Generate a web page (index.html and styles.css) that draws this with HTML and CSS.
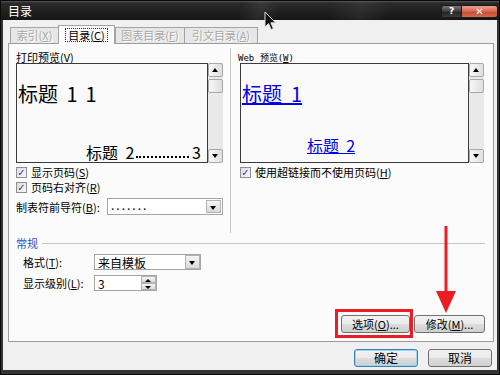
FILE: index.html
```html
<!DOCTYPE html>
<html lang="zh-CN">
  <head>
    <meta charset="UTF-8" />
    <title>目录</title>
    <link rel="stylesheet" href="styles.css">
  </head>
  <body>
    <div class="window">
      <div class="titlebar">
        <span class="title">目录</span>
        <div class="caption-btns">
          <span class="cap-btn help">?</span>
          <span class="cap-btn close">✕</span>
        </div>
      </div>

      <div class="client">
        <div class="tabs">
          <span class="tab t1">索引(<u>X</u>)</span>
          <span class="tab active t2"><span class="focus">目录(<u>C</u>)</span></span>
          <span class="tab t3">图表目录(<u>F</u>)</span>
          <span class="tab t4">引文目录(<u>A</u>)</span>
        </div>

        <div class="panel">
          <div class="top">
            <div class="col col-left">
              <div class="label">打印预览(<u>V</u>)</div>
              <div class="preview-wrap">
                <div class="preview">
                  <div class="p-h1">标题 <span class="num">1</span><span class="pg">1</span></div>
                  <div class="p-h2"><span>标题 <span class="num">2</span></span><span class="dots"></span><span>3</span></div>
                </div>
                <div class="scrollbar">
                  <span class="sb-btn up"></span>
                  <span class="sb-thumb"></span>
                  <span class="sb-track"></span>
                  <span class="sb-btn down"></span>
                </div>
              </div>
              <div class="check first"><span class="box">✓</span>显示页码(<u>S</u>)</div>
              <div class="check"><span class="box">✓</span>页码右对齐(<u>R</u>)</div>
              <div class="field-row leader">
                <span class="field-label">制表符前导符(<u>B</u>):</span>
                <div class="combo leader-combo">
                  <span class="combo-text">.......</span>
                  <span class="combo-btn"></span>
                </div>
              </div>
            </div>

            <div class="sep"></div>

            <div class="col col-right">
              <div class="label web-label">Web 预览(<u>W</u>)</div>
              <div class="preview-wrap web">
                <div class="preview">
                  <div class="w-h1">标题&nbsp;&nbsp;1</div>
                  <div class="w-h2">标题&nbsp;&nbsp;2</div>
                </div>
                <div class="scrollbar">
                  <span class="sb-btn up"></span>
                  <span class="sb-thumb"></span>
                  <span class="sb-track"></span>
                  <span class="sb-btn down"></span>
                </div>
              </div>
              <div class="check first web-check"><span class="box">✓</span>使用超链接而不使用页码(<u>H</u>)</div>
            </div>
          </div>

          <div class="group-title"><span>常规</span><span class="group-line"></span></div>
          <div class="field-row general first-row">
            <span class="field-label">格式(<u>T</u>):</span>
            <div class="combo format-combo">
              <span class="combo-text">来自模板</span>
              <span class="combo-btn"></span>
            </div>
          </div>
          <div class="field-row general second-row">
            <span class="field-label">显示级别(<u>L</u>):</span>
            <div class="spinner">
              <span class="combo-text">3</span>
              <span class="spin-btns"><span class="spin up"></span><span class="spin down"></span></span>
            </div>
          </div>

          <div class="panel-buttons">
            <span class="btn opt">选项(<u>O</u>)...</span>
            <span class="btn mod">修改(<u>M</u>)...</span>
          </div>
        </div>

        <div class="footer">
          <span class="btn default">确定</span>
          <span class="btn">取消</span>
        </div>
      </div>

      <div class="highlight"></div>
      <svg class="overlay" width="500" height="375" viewBox="0 0 500 375">
        <line x1="446" y1="226" x2="446" y2="294" stroke="#ec1c24" stroke-width="3" />
        <polygon points="436,291 456,291 446,313" fill="#ec1c24" />
        <path d="M265 12 L265 27 L268.5 23.6 L271.2 29.5 L273.4 28.5 L270.8 22.8 L275.6 22.8 Z" fill="#111" stroke="#ddd" stroke-width="1" stroke-linejoin="round" />
      </svg>
    </div>
  </body>
</html>
```

FILE: styles.css
```css
* {
  box-sizing: border-box;
}
body {
  margin: 0;
  font-family: "Noto Sans CJK SC", "DejaVu Sans", sans-serif;
  font-size: 11px;
  color: #000;
  background: #2a2a2a;
}
u {
  text-decoration: underline;
}
.window {
  position: relative;
  width: 500px;
  height: 375px;
  background: #343434;
  border: 1px solid #0a0a0a;
  display: flex;
  flex-direction: column;
  overflow: hidden;
}

/* title bar */
.titlebar {
  height: 19px;
  display: flex;
  align-items: flex-start;
  justify-content: space-between;
  background:
    linear-gradient(105deg, transparent 48%, rgba(255, 255, 255, 0.07) 52%, transparent 56%),
    linear-gradient(100deg, transparent 66%, rgba(255, 255, 255, 0.06) 72%, transparent 78%),
    linear-gradient(to bottom, #555 0, #2a2a2a 2px, #161616 100%);
}
.title {
  color: #fff;
  font-size: 12px;
  line-height: 17px;
  padding-left: 7px;
  padding-top: 1px;
}
.caption-btns {
  display: flex;
  margin-top: 4px;
  margin-right: 1px;
}
.cap-btn {
  height: 13px;
  color: #fff;
  font-weight: bold;
  font-family: "DejaVu Sans", sans-serif;
  font-size: 9px;
  line-height: 11px;
  text-align: center;
  border: 1px solid #1a1a1a;
}
.help {
  width: 21px;
  border-radius: 3px 0 0 3px;
  background: linear-gradient(to bottom, #7a7a7a, #3a3a3a 50%, #222 51%, #3c3c3c);
}
.close {
  width: 36px;
  border-left: none;
  border-radius: 0 3px 3px 0;
  font-size: 10px;
  background: linear-gradient(to bottom, #eaa08e, #d5664d 50%, #c44a2f 51%, #d76a4f);
}

/* client area */
.client {
  flex: 1;
  margin: 0 2px 4px 2px;
  background: #f0f0f0;
  padding: 5px 3px 0 5px;
  display: flex;
  flex-direction: column;
}
.tabs {
  height: 19px;
  margin-bottom: -1px;
  padding-left: 2px;
  display: flex;
  align-items: flex-start;
}
.tab {
  height: 16px;
  margin-top: 2px;
  border: 1px solid #a3a3a3;
  border-bottom: none;
  border-right: none;
  background: #e6e6e6;
  color: #a6a6a6;
  text-shadow: 1px 1px 0 #fff;
  line-height: 14px;
  text-align: center;
}
.t1 { width: 48px; }
.t2 { width: 57px; }
.t3 { width: 69px; }
.t4 { width: 74px; border-right: 1px solid #a3a3a3; }
.tab.active {
  position: relative;
  z-index: 1;
  height: 19px;
  margin-top: 0;
  background: #fbfbfb;
  color: #000;
  text-shadow: none;
  border-right: 1px solid #a3a3a3;
  padding-top: 2px;
}
.focus {
  display: inline-block;
  border: 1px dotted #333;
  padding: 0 2px;
  line-height: 12px;
}

.panel {
  height: 299px;
  border: 1px solid #9c9c9c;
  background: #fbfbfb;
  padding: 4px 7px 8px 7px;
  display: flex;
  flex-direction: column;
}
.top {
  height: 185px;
  display: flex;
}
.col {
  padding-top: 4px;
}
.col-left {
  width: 207px;
}
.col-right {
  flex: 1;
}
.sep {
  width: 1px;
  margin: 0 7px;
  background: #c8c8c8;
}
.label {
  height: 11px;
  line-height: 11px;
}
.web-label {
  margin-top: 1px;
  height: 10px;
  line-height: 10px;
  font-family: "DejaVu Sans Mono", monospace;
  font-size: 9px;
}

/* preview boxes */
.preview-wrap {
  display: flex;
  height: 100px;
}
.preview-wrap.web {
  margin-left: 2px;
}
.preview {
  width: 192px;
  height: 100px;
  border: 1px solid #3c3c3c;
  background: #fafafa;
  overflow: hidden;
  padding-left: 1px;
}
.web .preview {
  width: 229px;
}
.num {
  margin-left: 4px;
}
.p-h1 {
  margin-top: 18px;
  font-size: 20px;
  line-height: 24px;
  white-space: pre;
}
.p-h1 .pg {
  margin-left: 8px;
}
.p-h2 {
  margin-top: 36px;
  margin-left: 68px;
  margin-right: 6px;
  display: flex;
  font-size: 16px;
  line-height: 20px;
  white-space: pre;
}
.dots {
  flex: 1;
  border-bottom: 2px dotted #000;
  margin: 0 3px 4px 2px;
}
.w-h1 {
  margin-top: 18px;
  font-size: 20px;
  line-height: 24px;
  color: #0000ee;
  text-decoration: underline;
  white-space: pre;
}
.w-h2 {
  margin-top: 29px;
  margin-left: 65px;
  font-size: 16px;
  line-height: 20px;
  color: #0000ee;
  text-decoration: underline;
  white-space: pre;
}

/* scrollbars */
.scrollbar {
  width: 15px;
  display: flex;
  flex-direction: column;
  background: #e9e9e9;
}
.sb-btn,
.sb-thumb {
  height: 14px;
  border: 1px solid #a8a8a8;
  border-radius: 2px;
  background: linear-gradient(to right, #f8f8f8, #dedede);
  position: relative;
}
.sb-thumb {
  margin-top: 2px;
}
.sb-track {
  flex: 1;
}
.sb-btn::after {
  content: "";
  position: absolute;
  left: 3px;
  top: 4px;
  border-left: 3px solid transparent;
  border-right: 3px solid transparent;
}
.sb-btn.up::after {
  border-bottom: 4px solid #000;
}
.sb-btn.down::after {
  border-top: 4px solid #000;
}

/* checkboxes */
.check {
  height: 15px;
  line-height: 15px;
  display: flex;
  align-items: center;
  white-space: nowrap;
}
.check.first {
  margin-top: 2px;
}
.web-check {
  margin-left: 2px;
}
.box {
  width: 11px;
  height: 11px;
  border: 1px solid #8e8f8f;
  background: linear-gradient(135deg, #dcdcdc, #fafafa);
  margin-right: 4px;
  color: #1d3aa0;
  font-size: 10px;
  line-height: 9px;
  text-align: center;
  font-family: "DejaVu Sans", sans-serif;
  font-weight: bold;
}

/* combos and rows */
.field-row {
  display: flex;
  align-items: center;
}
.leader {
  margin-top: 3px;
}
.leader .field-label {
  width: 91px;
}
.combo,
.spinner {
  height: 17px;
  border: 1px solid #a5a5a5;
  background: #fff;
  display: flex;
  align-items: stretch;
}
.leader-combo {
  width: 116px;
}
.combo-text {
  flex: 1;
  padding-left: 3px;
  line-height: 15px;
  font-size: 12px;
}
.leader-combo .combo-text {
  letter-spacing: 2px;
  line-height: 11px;
}
.combo-btn {
  width: 15px;
  margin: 1px;
  border: 1px solid #b3b3b3;
  background: linear-gradient(to bottom, #f6f6f6, #dadada);
  position: relative;
}
.combo-btn::after {
  content: "";
  position: absolute;
  left: 3px;
  top: 5px;
  border-left: 3px solid transparent;
  border-right: 3px solid transparent;
  border-top: 4px solid #000;
}

.group-title {
  margin-top: 4px;
  height: 12px;
  display: flex;
  align-items: center;
  color: #1c55c4;
  line-height: 12px;
}
.group-line {
  flex: 1;
  height: 1px;
  background: #c6c6c6;
  margin-left: 4px;
  margin-right: 1px;
}
.general {
  padding-left: 7px;
}
.general .field-label {
  width: 71px;
}
.first-row {
  margin-top: 5px;
}
.second-row {
  margin-top: 5px;
}
.format-combo {
  width: 107px;
  height: 16px;
}
.format-combo .combo-btn {
  margin: 0;
}
.spinner {
  width: 63px;
  height: 16px;
}
.spin-btns {
  width: 15px;
  display: flex;
  flex-direction: column;
}
.spin {
  flex: 1;
  border: 1px solid #b3b3b3;
  background: linear-gradient(to bottom, #f6f6f6, #dadada);
  position: relative;
}
.spin::after {
  content: "";
  position: absolute;
  left: 3px;
  top: 2px;
  border-left: 3px solid transparent;
  border-right: 3px solid transparent;
}
.spin.up::after {
  border-bottom: 3px solid #000;
}
.spin.down::after {
  border-top: 3px solid #000;
}

/* buttons */
.panel-buttons {
  margin-top: auto;
  margin-right: 1px;
  display: flex;
  justify-content: flex-end;
  gap: 4px;
}
.btn {
  height: 18px;
  border: 1px solid #707070;
  border-radius: 3px;
  background: linear-gradient(to bottom, #f2f2f2 0, #ebebeb 50%, #dddddd 51%, #cfcfcf 100%);
  text-align: center;
  line-height: 16px;
  font-size: 11px;
}
.opt { width: 69px; }
.mod { width: 71px; }
.footer {
  margin-top: 7px;
  margin-right: 2px;
  display: flex;
  justify-content: flex-end;
  gap: 10px;
}
.footer .btn {
  width: 64px;
  font-size: 12px;
}
.btn.default {
  border-color: #3c7fb1;
  box-shadow: inset 0 0 0 1px #94d8f6;
}

/* annotations over the screenshot */
.highlight {
  position: absolute;
  left: 334px;
  top: 308px;
  width: 78px;
  height: 29px;
  border: 3px solid #ec1c24;
}
.overlay {
  position: absolute;
  left: -1px;
  top: -1px;
  pointer-events: none;
}
```
